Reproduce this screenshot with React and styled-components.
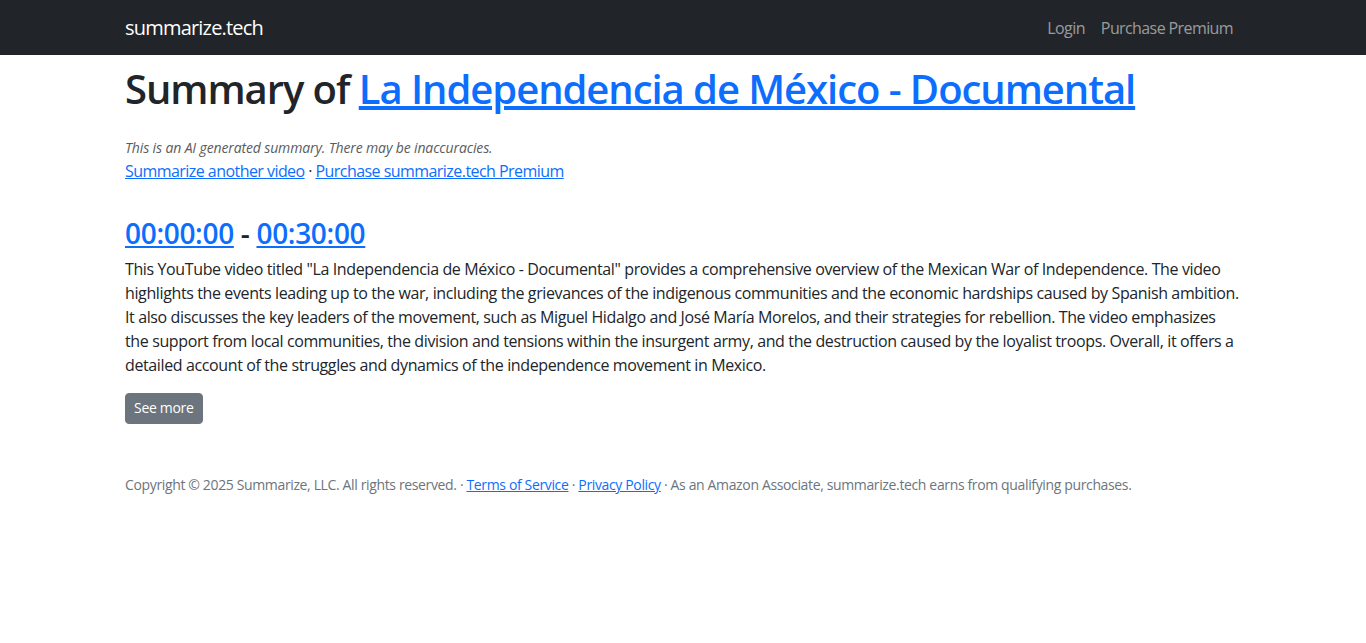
import React from "react";
import styled, { createGlobalStyle } from "styled-components";

const Global = createGlobalStyle`
  * { box-sizing: border-box; }
  body {
    margin: 0;
    background: #fff;
    color: #212529;
    font-family: "Open Sans", "Noto Sans", sans-serif;
    font-size: 16px;
    line-height: 1.5;
    letter-spacing: -0.38px;
  }
`;

const Navbar = styled.nav`
  background: #212529;
  height: 55px;
  display: flex;
  align-items: center;
`;

const Container = styled.div`
  width: 1140px;
  margin: 0 auto;
  padding: 0 12px;
`;

const NavInner = styled(Container)`
  display: flex;
  align-items: center;
  justify-content: space-between;
`;

const Brand = styled.a`
  color: #fff;
  font-size: 20px;
  line-height: 30px;
  letter-spacing: -0.8px;
  text-decoration: none;
`;

const NavLinks = styled.div`
  display: flex;
`;

const NavLink = styled.a`
  color: rgba(255, 255, 255, 0.55);
  text-decoration: none;
  padding: 0 8px;
  line-height: 24px;
  letter-spacing: -0.6px;
`;

const Main = styled(Container)`
  padding-top: 10px;
`;

const Title = styled.h1`
  font-size: 40px;
  font-weight: 600;
  line-height: 1.2;
  letter-spacing: -1.05px;
  margin: 0 0 24px;
`;

const Link = styled.a`
  color: #0d6efd;
  text-decoration: underline;
`;

const Disclaimer = styled.p`
  margin: 0;
  font-size: 14px;
  line-height: 21px;
  font-style: italic;
  letter-spacing: -0.13px;
  color: #595c5f;
`;

const Actions = styled.p`
  margin: 1px 0 34px;
  line-height: 24px;
  letter-spacing: -0.55px;
`;

const Section = styled.section``;

const TimeRange = styled.h3`
  font-size: 28px;
  font-weight: 600;
  line-height: 1.2;
  letter-spacing: -0.32px;
  margin: 0 0 6px;
`;

const Paragraph = styled.p`
  margin: 0 0 16px;
`;

const Button = styled.button`
  font-family: inherit;
  letter-spacing: -0.3px;
  background: #6c757d;
  color: #fff;
  border: 1px solid #6c757d;
  border-radius: 4px;
  font-size: 14px;
  line-height: 21px;
  padding: 3px 8px 5px;
  cursor: pointer;
`;

const Footer = styled.footer`
  margin-top: 50px;
  font-size: 14px;
  line-height: 21px;
  letter-spacing: -0.36px;
  color: #6c757d;
`;

export default function App() {
  return (
    <>
      <Global />
      <Navbar>
        <NavInner>
          <Brand href="#">summarize.tech</Brand>
          <NavLinks>
            <NavLink href="#">Login</NavLink>
            <NavLink href="#">Purchase Premium</NavLink>
          </NavLinks>
        </NavInner>
      </Navbar>
      <Main>
        <Title>
          Summary of <Link href="#">La Independencia de México - Documental</Link>
        </Title>
        <Disclaimer>This is an AI generated summary. There may be inaccuracies.</Disclaimer>
        <Actions>
          <Link href="#">Summarize another video</Link> · <Link href="#">Purchase summarize.tech Premium</Link>
        </Actions>
        <Section>
          <TimeRange>
            <Link href="#">00:00:00</Link> - <Link href="#">00:30:00</Link>
          </TimeRange>
          <Paragraph>
            This YouTube video titled "La Independencia de México - Documental" provides a comprehensive overview of the Mexican War of Independence. The video highlights the events leading up to the war, including the grievances of the indigenous communities and the economic hardships caused by Spanish ambition. It also discusses the key leaders of the movement, such as Miguel Hidalgo and José María Morelos, and their strategies for rebellion. The video emphasizes the support from local communities, the division and tensions within the insurgent army, and the destruction caused by the loyalist troops. Overall, it offers a detailed account of the struggles and dynamics of the independence movement in Mexico.
          </Paragraph>
          <Button>See more</Button>
        </Section>
        <Footer>
          Copyright © 2025 Summarize, LLC. All rights reserved. · <Link href="#">Terms of Service</Link> · <Link href="#">Privacy Policy</Link> · As an Amazon Associate, summarize.tech earns from qualifying purchases.
        </Footer>
      </Main>
    </>
  );
}
